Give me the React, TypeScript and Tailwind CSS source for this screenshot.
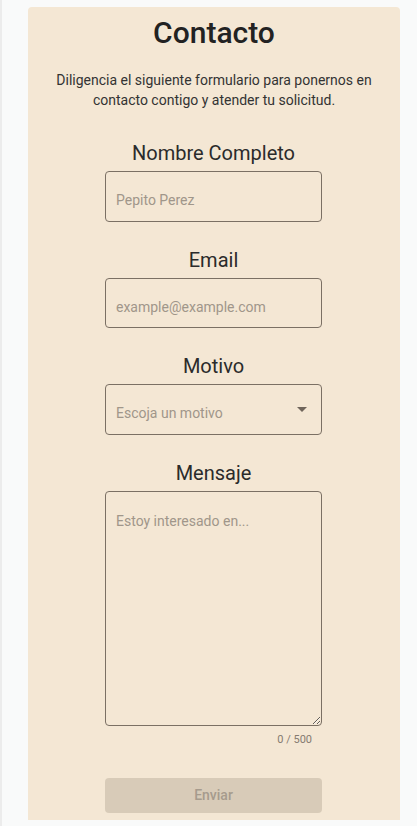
import React from "react";

export default function App() {
  const font = { fontFamily: "Roboto, 'Noto Sans', Arial, sans-serif" };
  return (
    <div
      className="w-[417px] h-[826px] overflow-hidden bg-[#f9fafa] border-l-2 border-[#ececec] flex flex-col"
      style={font}
    >
      <div className="flex-1 flex">
        <div className="ml-[26px] mt-[7px] w-[372px] h-[813px] bg-[#f4e7d4] rounded-t-[4px] flex flex-col items-center pt-[8px]">
          <h1 className="text-[30px] leading-[36px] font-medium text-[#222]">Contacto</h1>
          <p className="mt-[19px] text-[14px] leading-[20px] text-[#333] text-center px-[26px]">
            Diligencia el siguiente formulario para ponernos en contacto contigo y atender tu solicitud.
          </p>

          <div className="mt-[29px] -ml-[1px] w-[217px] flex flex-col items-center">
            <label className="text-[20px] leading-[28px] text-[#2b2b2b]">Nombre Completo</label>
            <input
              placeholder="Pepito Perez"
              className="mt-[4px] w-full h-[51px] rounded-[4px] border border-[#7b7064] bg-transparent pt-[7px] px-[10px] text-[14px] outline-none placeholder:text-[#a0968a]"
            />

            <label className="mt-[24px] text-[20px] leading-[28px] text-[#2b2b2b]">Email</label>
            <input
              placeholder="example@example.com"
              className="mt-[4px] w-full h-[50px] rounded-[4px] border border-[#7b7064] bg-transparent pt-[7px] px-[10px] text-[14px] outline-none placeholder:text-[#a0968a]"
            />

            <label className="mt-[24px] text-[20px] leading-[28px] text-[#2b2b2b]">Motivo</label>
            <div className="mt-[4px] w-full h-[51px] rounded-[4px] border border-[#7b7064] flex items-center pt-[7px] pl-[10px] pr-[14px] justify-between">
              <span className="text-[14px] text-[#a0968a]">Escoja un motivo</span>
              <svg width="10" height="5" viewBox="0 0 10 5" className="-mt-[8px]">
                <path d="M0 0 L10 0 L5 5 Z" fill="#6f655b" />
              </svg>
            </div>

            <label className="mt-[24px] text-[20px] leading-[28px] text-[#2b2b2b]">Mensaje</label>
            <textarea
              placeholder="Estoy interesado en..."
              className="mt-[4px] w-full h-[235px] rounded-[4px] border border-[#7b7064] bg-transparent pt-[19px] px-[10px] text-[14px] leading-[20px] outline-none placeholder:text-[#a0968a] resize-y"
            />
            <div className="w-full text-right pr-[10px] mt-[7px] text-[11px] leading-[14px] text-[#857b70]">0 / 500</div>

            <button
              disabled
              className="mt-[31px] w-full h-[35px] rounded-[4px] bg-[#d8cbb8] text-[14px] font-medium text-[#a69b8d]"
            >
              Enviar
            </button>
          </div>
        </div>
      </div>
    </div>
  );
}
